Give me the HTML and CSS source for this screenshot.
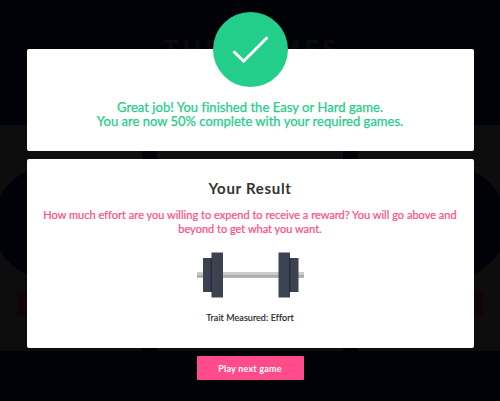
FILE: index.html
```html
<!DOCTYPE html>
<html lang="en">
<head>
<meta charset="utf-8">
<title>Your Result</title>
<link rel="stylesheet" href="styles.css">
</head>
<body>
<div class="backdrop" aria-hidden="true">
  <div class="backdrop-title">THE GAMES</div>
  <div class="games">
    <div class="game"><i class="disc"></i><i class="bar"></i></div>
    <div class="game"></div>
    <div class="game"><i class="disc"></i><i class="bar"></i></div>
  </div>
</div>
<main class="modal">
  <section class="card done">
    <svg class="check" viewBox="0 0 75 75"><circle cx="37.5" cy="37.5" r="37.5" fill="#23cd8a"/><path d="M20.500 39.200L30.600 49.200L54.500 25.300" fill="none" stroke="#fff" stroke-width="3"/></svg>
    <p class="line done-one">Great job! You finished the Easy or Hard game.</p>
    <p class="line done-two">You are now 50% complete with your required games.</p>
  </section>
  <section class="card result">
    <h1>Your Result</h1>
    <p class="line trait-one">How much effort are you willing to expend to receive a reward? You will go above and</p>
    <p class="line trait-two">beyond to get what you want.</p>
    <svg class="barbell" viewBox="0 0 107 46">
      <path fill="#cbcbcb" d="M0 20h107v6H0z"/><path fill="#acacac" d="M0 23h107v2.500H0z"/>
      <path fill="#3c4250" d="M6 6h9v34H6zM14.500 .5h11.500v45H14.500zM81.500 .5H93v45H81.500zM92 6h9.500v34H92z"/>
      <path fill="#272d39" d="M13.500 6h1.500v34h-1.500zM92 6h1.500v34H92z"/>
    </svg>
    <p class="line measured">Trait Measured: Effort</p>
  </section>
  <button class="next"><span>Play next game</span></button>
</main>
</body>
</html>
```

FILE: styles.css
```css
* { box-sizing: border-box; }
body {
  margin: 0;
  width: 500px;
  height: 401px;
  overflow: hidden;
  background: #010207;
  font-family: Lato, "Liberation Sans", sans-serif;
}
.backdrop {
  position: absolute;
  inset: 0;
  overflow: hidden;
  border-bottom: 1px solid #000;
}
.backdrop-title {
  height: 125px;
  padding-top: 34px;
  padding-left: 4px;
  text-align: center;
  font: 900 24px/30px Lato, sans-serif;
  letter-spacing: 4.5px;
  color: #0b0b0b;
}
.games {
  display: grid;
  grid-template-columns: repeat(3, 186px);
  justify-content: center;
  gap: 15px;
  height: 226px;
}
.game {
  display: flex;
  flex-direction: column;
  align-items: center;
  padding-top: 42px;
  background: #0d0d0d;
}
.disc { width: 112px; height: 112px; border-radius: 50%; background: #010207; }
.bar { width: 64px; height: 25px; margin-top: 12px; background: #13040a; }
.modal {
  position: relative;
  display: flex;
  flex-direction: column;
  align-items: center;
  padding-top: 49px;
}
.card {
  display: flex;
  flex-direction: column;
  align-items: center;
  width: 447px;
  background: #fff;
  border-radius: 2px;
}
.done { height: 102px; }
.check { width: 75px; height: 75px; margin: -37px 0 13px; flex: none; }
.line { margin: 0; white-space: nowrap; }
.done-one, .done-two { font-size: 13px; line-height: 14px; color: #23cd8a; -webkit-text-stroke: .25px #23cd8a; }
.done-one { letter-spacing: .05px; }
.done-two { letter-spacing: .01px; }
.result { height: 189px; margin-top: 8px; padding-top: 19px; }
h1 { margin: 0 0 10px; font-size: 15px; line-height: 20px; font-weight: 700; color: #333; letter-spacing: .7px; }
.trait-one, .trait-two { font-size: 11px; line-height: 14px; color: #ff4b87; -webkit-text-stroke: .2px #ff4b87; }
.trait-one { letter-spacing: .015px; }
.barbell { width: 107px; height: 46px; margin-top: 16px; flex: none; }
.measured { margin-top: 13px; font-size: 9px; line-height: 14px; color: #222; letter-spacing: .06px; -webkit-text-stroke: .15px #222; }
.next {
  width: 107px;
  height: 24px;
  margin-top: 8px;
  padding: 0;
  border: 0;
  border-radius: 1px;
  background: #ff4b87;
  color: #fff;
  font: 700 9px/23px Lato, sans-serif;
  letter-spacing: .2px;
}
```
